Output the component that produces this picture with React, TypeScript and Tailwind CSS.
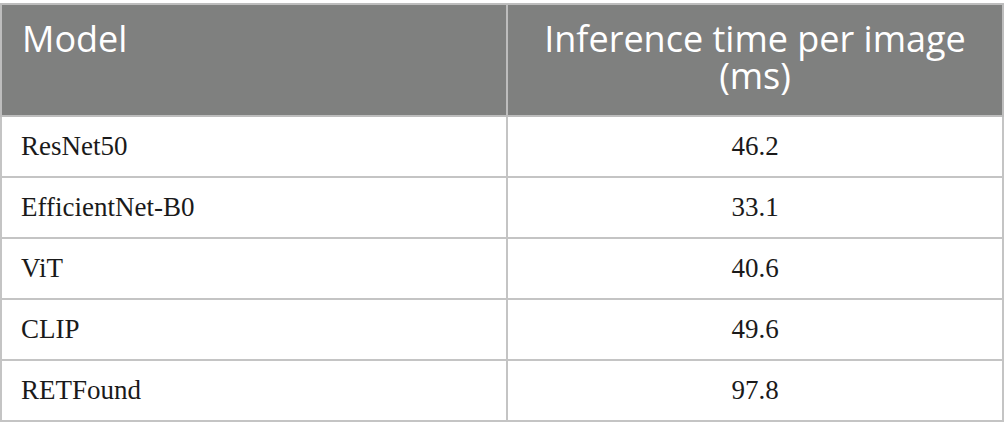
const rows: [string, string][] = [
  ["ResNet50", "46.2"],
  ["EfficientNet-B0", "33.1"],
  ["ViT", "40.6"],
  ["CLIP", "49.6"],
  ["RETFound", "97.8"],
];

export default function App() {
  return (
    <div className="w-[1005px] h-[440px] bg-white pt-[3px]">
      <table className="w-[1004px] border-collapse table-fixed border-2 border-[#bdbdbd]">
        <colgroup>
          <col className="w-[506px]" />
          <col />
        </colgroup>
        <thead>
          <tr className="h-[112px] bg-[#7f807f] text-white font-['Open_Sans',sans-serif] text-[36px] leading-[37px] align-top">
            <th className="text-left font-normal pl-[20px] pt-[15px] border-2 border-[#bdbdbd]">Model</th>
            <th className="text-center font-normal px-4 pt-[15px] border-2 border-[#bdbdbd]">
              Inference time per image (ms)
            </th>
          </tr>
        </thead>
        <tbody className="font-['Liberation_Serif',serif] text-[27px] text-[#1a1a1a]">
          {rows.map(([name, time]) => (
            <tr key={name} className="h-[61px]">
              <td className="pl-[19px] border-2 border-[#c4c4c4] align-middle">{name}</td>
              <td className="text-center border-2 border-[#c4c4c4] align-middle">{time}</td>
            </tr>
          ))}
        </tbody>
      </table>
    </div>
  );
}
